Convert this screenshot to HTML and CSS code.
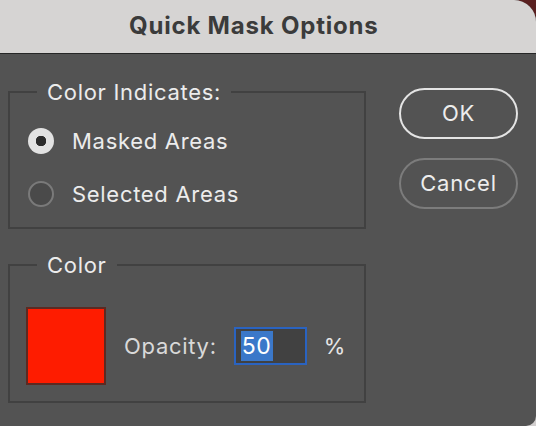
FILE: index.html
```html
<!DOCTYPE html>
<html>
<head>
<meta charset="utf-8">
<link rel="stylesheet" href="styles.css">
</head>
<body>
<div class="window">
  <div class="titlebar">Quick Mask Options</div>
  <div class="content">
    <div class="left">
      <fieldset class="group group-indicates">
        <legend>Color Indicates:</legend>
        <label class="radio-row"><span class="radio checked"></span><span>Masked Areas</span></label>
        <label class="radio-row"><span class="radio"></span><span>Selected Areas</span></label>
      </fieldset>
      <fieldset class="group group-color">
        <legend>Color</legend>
        <div class="color-row">
          <div class="swatch"></div>
          <span class="opacity-label">Opacity:</span>
          <div class="input"><span class="sel">50</span></div>
          <span class="pct">%</span>
        </div>
      </fieldset>
    </div>
    <div class="right">
      <div class="btn btn-ok">OK</div>
      <div class="btn btn-cancel">Cancel</div>
    </div>
  </div>
</div>
</body>
</html>
```
FILE: styles.css
```css
html, body {
  margin: 0;
  padding: 0;
  background: linear-gradient(#5a2020 0 60%, #d2cfcf 60%);
}
body {
  width: 536px;
  height: 426px;
  overflow: hidden;
  font-family: Inter, "Liberation Sans", sans-serif;
  letter-spacing: 0.7px;
}
.window {
  width: 536px;
  height: 426px;
  background: #535353;
  border-top-right-radius: 22px;
  border-bottom-right-radius: 10px;
  overflow: hidden;
  display: flex;
  flex-direction: column;
}
.titlebar {
  height: 53px;
  flex: none;
  background: #d6d4d3;
  border-bottom: 1px solid #262626;
  color: #3b3b3b;
  font-weight: 700;
  font-size: 24px;
  letter-spacing: 0.8px;
  line-height: 52px;
  padding-left: 129px;
  box-sizing: content-box;
}
.content {
  flex: 1;
  display: flex;
  padding: 26px 0 0 8px;
}
.left {
  width: 358px;
  flex: none;
  display: flex;
  flex-direction: column;
  gap: 24px;
}
.group {
  margin: 0;
  border: 2px solid #414141;
  color: #ececec;
  font-size: 22px;
}
.group legend {
  padding: 0 10px;
  line-height: 24px;
  font-size: 22px;
  color: #ececec;
}
.group-indicates {
  padding: 17px 0 13px 18px;
  display: flex;
  flex-direction: column;
  gap: 13px;
}
.group-indicates legend {
  margin-left: 9px;
}
.radio-row {
  height: 40px;
  display: flex;
  align-items: center;
  gap: 18px;
}
.radio {
  width: 26px;
  height: 26px;
  box-sizing: border-box;
  border-radius: 50%;
  border: 2px solid #7a7a7a;
  background: #4a4a4a;
  flex: none;
}
.radio.checked {
  border: none;
  background: radial-gradient(circle, #2c2c2c 0 5px, #e2e2e2 5.5px);
}
.group-color {
  padding: 30px 0 16px 16px;
}
.group-color legend {
  margin-left: 11px;
}
.color-row {
  display: flex;
  align-items: center;
}
.swatch {
  width: 80px;
  height: 78px;
  box-sizing: border-box;
  border: 2px solid #5c2a22;
  background: #fe1c00;
  flex: none;
}
.opacity-label {
  margin-left: 18px;
  color: #d9d9d9;
}
.input {
  margin-left: 17px;
  width: 73px;
  height: 38px;
  flex: none;
  box-sizing: border-box;
  border: 2px solid #2a63c0;
  background: #414141;
  padding: 2px 0 0 5px;
}
.sel {
  display: inline-block;
  height: 30px;
  line-height: 30px;
  padding: 0 1px;
  background: #3b78c9;
  color: #ffffff;
  font-size: 23px;
}
.pct {
  margin-left: 17px;
  color: #e6e6e6;
}
.right {
  margin-left: 33px;
  margin-top: 8px;
  display: flex;
  flex-direction: column;
  gap: 19px;
}
.btn {
  width: 119px;
  height: 51px;
  box-sizing: border-box;
  border-radius: 26px;
  display: flex;
  align-items: center;
  justify-content: center;
  color: #ededed;
  font-size: 22px;
  padding-bottom: 2px;
}
.btn-ok {
  border: 2px solid #e4e4e4;
}
.btn-cancel {
  border: 2px solid #7c7c7c;
}
```
